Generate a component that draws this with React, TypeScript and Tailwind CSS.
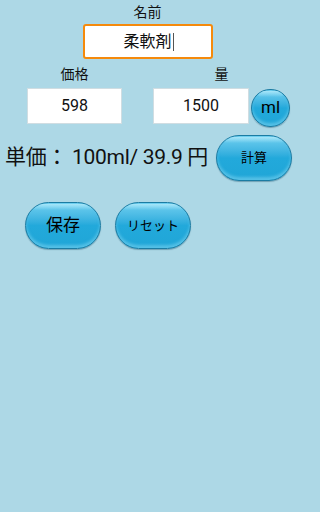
const font = { fontFamily: 'Roboto, "Noto Sans CJK JP", sans-serif' };

function GlossButton({
  label,
  className,
  textClass,
}: {
  label: string;
  className: string;
  textClass: string;
}) {
  return (
    <button
      className={`relative flex items-center justify-center overflow-hidden border border-[#1b7ca3] bg-gradient-to-b from-[#6fd0f0] via-[#22a9db] to-[#20a6d7] shadow-[inset_0_-3px_3px_rgba(120,210,240,0.6),0_1px_1px_rgba(0,60,90,0.35)] ${className}`}
    >
      <span className="pointer-events-none absolute inset-x-[6px] top-[1px] h-[6px] rounded-full bg-gradient-to-b from-[#b5ebfb] to-transparent opacity-80" />
      <span className={`relative text-black ${textClass}`}>{label}</span>
    </button>
  );
}

export default function App() {
  return (
    <div className="min-h-screen w-full bg-[#add8e6] text-black" style={font}>
      <div className="h-[512px] w-[295px] overflow-hidden">
        <div className="flex flex-col items-center pt-[3px]">
          <span className="text-[14px] leading-[18px] text-[#111]">名前</span>
          <div className="mt-[3px] flex h-[35px] w-[130px] items-center justify-center rounded-[3px] border-2 border-[#f58a0c] bg-white pl-[2px]">
            <span className="text-[16px] text-[#111]">柔軟剤</span>
            <span className="ml-[1px] h-[18px] w-px bg-[#555]" />
          </div>
        </div>

        <div className="mt-[6px] flex">
          <div className="ml-[27px] flex w-[95px] flex-col items-center">
            <span className="text-[14px] leading-[18px] text-[#111]">価格</span>
            <div className="mt-[5px] flex h-[36px] w-[95px] items-center justify-center border border-[#d0dde2] bg-white">
              <span className="text-[16px] text-[#111]">598</span>
            </div>
          </div>
          <div className="ml-[31px] flex flex-col items-center">
            <span className="text-[14px] leading-[18px] text-[#111]">量</span>
            <div className="mt-[5px] flex items-start">
              <div className="flex h-[36px] w-[96px] items-center justify-center border border-[#d0dde2] bg-white">
                <span className="text-[16px] text-[#111]">1500</span>
              </div>
              <GlossButton
                label="ml"
                className="ml-[2px] mt-[1px] h-[38px] w-[39px] rounded-full"
                textClass="text-[17px]"
              />
            </div>
          </div>
        </div>

        <div className="mt-[8px] flex items-center">
          <span className="ml-[5px] whitespace-nowrap text-[21px] tracking-[-0.3px] text-[#111]">
            単価： 100ml/ 39.9 円
          </span>
          <GlossButton
            label="計算"
            className="ml-auto mr-[3px] h-[46px] w-[76px] rounded-full"
            textClass="text-[13px]"
          />
        </div>

        <div className="ml-[25px] mt-[21px] flex gap-[14px]">
          <GlossButton
            label="保存"
            className="h-[47px] w-[76px] rounded-full"
            textClass="text-[17px]"
          />
          <GlossButton
            label="リセット"
            className="h-[47px] w-[76px] rounded-full"
            textClass="text-[13px]"
          />
        </div>
      </div>
    </div>
  );
}
